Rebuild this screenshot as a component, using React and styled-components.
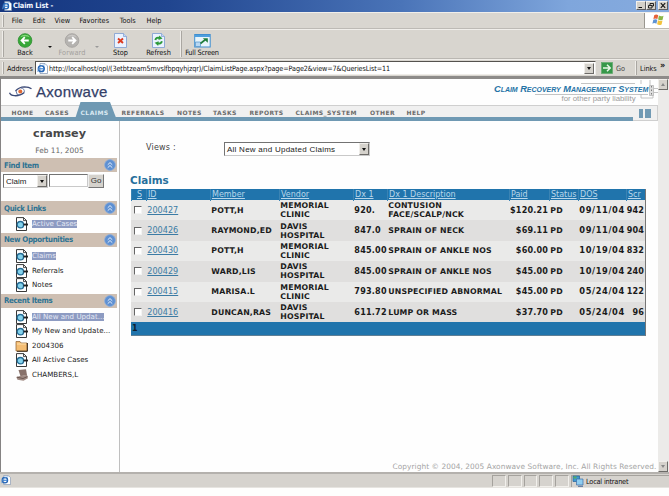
import React from "react";
import styled, { createGlobalStyle } from "styled-components";

const tahoma = `"DejaVu Sans Condensed", "DejaVu Sans", sans-serif`;
const verdana = `"DejaVu Sans", sans-serif`;
const arial = `"Liberation Sans", sans-serif`;

const GlobalStyle = createGlobalStyle`
  * { box-sizing: border-box; }
  body {
    margin: 0;
    background: #fefefd;
    overflow: hidden;
  }
`;

const menus = [
  { name: "File", width: 21 },
  { name: "Edit", width: 21.8 },
  { name: "View", width: 25 },
  { name: "Favorites", width: 40.2 },
  { name: "Tools", width: 26.8 },
  { name: "Help", width: 20 },
];

const tabs = [
  { name: "HOME", width: 33.5 },
  { name: "CASES", width: 35.5 },
  { name: "CLAIMS", width: 41, active: true },
  { name: "REFERRALS", width: 55.5 },
  { name: "NOTES", width: 36 },
  { name: "TASKS", width: 36.5 },
  { name: "REPORTS", width: 46 },
  { name: "CLAIMS_SYSTEM", width: 74.5 },
  { name: "OTHER", width: 36.5 },
  { name: "HELP", width: 30 },
];

const columns = [
  { name: "S", align: "center" },
  { name: "ID" },
  { name: "Member" },
  { name: "Vendor" },
  { name: "Dx 1" },
  { name: "Dx 1 Description" },
  { name: "Paid" },
  { name: "Status" },
  { name: "DOS" },
  { name: "Scr" },
];

const claims = [
  { id: "200427", member: "POTT,H", vendor: ["MEMORIAL", "CLINIC"], dx: "920.", desc: ["CONTUSION", "FACE/SCALP/NCK"], paid: "$120.21", dos: "09/11/04", scr: "942" },
  { id: "200426", member: "RAYMOND,ED", vendor: ["DAVIS", "HOSPITAL"], dx: "847.0", desc: ["SPRAIN OF NECK"], paid: "$69.11", dos: "09/11/04", scr: "904" },
  { id: "200430", member: "POTT,H", vendor: ["MEMORIAL", "CLINIC"], dx: "845.00", desc: ["SPRAIN OF ANKLE NOS"], paid: "$60.00", dos: "10/19/04", scr: "832" },
  { id: "200429", member: "WARD,LIS", vendor: ["DAVIS", "HOSPITAL"], dx: "845.00", desc: ["SPRAIN OF ANKLE NOS"], paid: "$45.00", dos: "10/19/04", scr: "240" },
  { id: "200415", member: "MARISA.L", vendor: ["MEMORIAL", "CLINIC"], dx: "793.80", desc: ["UNSPECIFIED ABNORMAL"], paid: "$45.00", dos: "05/24/04", scr: "122" },
  { id: "200416", member: "DUNCAN,RAS", vendor: ["DAVIS", "HOSPITAL"], dx: "611.72", desc: ["LUMP OR MASS"], paid: "$37.70", dos: "05/24/04", scr: "96" },
];

/* ---------- browser window ---------- */

const Window = styled.div`
  width: 669px;
  height: 496px;
  display: flex;
  flex-direction: column;
  background: #fefefd;
  font-family: ${tahoma};
  font-stretch: condensed;
  font-size: 7.3px;
  letter-spacing: -0.05px;
  color: #111;
  white-space: nowrap;
  overflow: hidden;
`;

const TitleBar = styled.div`
  height: 12px;
  flex: none;
  display: flex;
  align-items: center;
  padding: 0 1px 1px 2px;
  background: linear-gradient(90deg, #15367f 0%, #20458f 25%, #4a74b8 60%, #7fa6dc 85%, #86abde 100%);
`;

const TitleText = styled.span`
  flex: 1;
  margin-left: 1px;
  color: #f4f7ff;
  font-weight: bold;
  font-size: 7.4px;
  letter-spacing: -0.15px;
`;

const WindowButton = styled.span`
  width: 10px;
  height: 9px;
  margin-left: ${(p) => p.$gap || 0}px;
  border: 1px solid;
  border-color: #f2f0ec #5d5d60 #5d5d60 #f2f0ec;
  background: #d4d0c8;
  svg { display: block; }
`;

const MenuBar = styled.div`
  height: 17px;
  flex: none;
  display: flex;
  align-items: center;
  padding-left: 3px;
  background: #d9d6d0;
  border-top: 1px solid #f1efeb;
  border-bottom: 1px solid #bdbab5;
`;

const Grip = styled.span`
  width: 1px;
  height: ${(p) => p.$height}px;
  margin-right: ${(p) => p.$gap}px;
  background: #aaa7a2;
  box-shadow: -1px 0 #efede9;
`;

const MenuItem = styled.span`
  width: ${(p) => p.$width}px;
  letter-spacing: 0;
`;

const WindowsFlag = styled.div`
  width: 25px;
  height: 15px;
  margin-left: auto;
  padding-left: 7px;
  background: #fff;
  border-left: 1px solid #99968f;
`;

const Toolbar = styled.div`
  height: 30px;
  flex: none;
  display: flex;
  align-items: center;
  padding-left: 3px;
  background: #d8d5cf;
  border-top: 1px solid #f0eeea;
  border-bottom: 1px solid #bab7b2;
`;

const ToolButton = styled.div`
  width: ${(p) => p.$width}px;
  height: 27px;
  display: flex;
  flex-direction: column;
  align-items: center;
  justify-content: space-between;
  line-height: 10px;
  letter-spacing: ${(p) => p.$spacing || 0}px;
  color: ${(p) => (p.$disabled ? "#a4a19d" : "#111")};
  svg { display: block; margin-top: 2px; }
`;

const DropArrow = styled.span`
  width: 0;
  margin: 5px ${(p) => p.$right}px 0 ${(p) => p.$left}px;
  border: 2px solid transparent;
  border-top-color: ${(p) => (p.$disabled ? "#999" : "#111")};
  border-bottom: 0;
`;

const AddressBar = styled.div`
  height: 17px;
  flex: none;
  display: flex;
  align-items: center;
  padding-left: 3px;
  background: #d8d5cf;
  border-top: 1px solid #efede9;
`;

const AddressField = styled.div`
  width: 561px;
  height: 14px;
  display: flex;
  align-items: center;
  padding: 0 1px;
  margin-left: 2.3px;
  background: #fff;
  border: 1px solid;
  border-color: #55534f #efede9 #efede9 #55534f;
`;

const Url = styled.span`
  flex: 1;
  margin-left: 1px;
  font-size: 7.2px;
  letter-spacing: -0.1px;
`;

const BoxArrow = styled.span`
  width: 10px;
  height: ${(p) => p.$height || 11}px;
  flex: none;
  display: flex;
  align-items: center;
  justify-content: center;
  background: #d5d2cc;
  border: 1px solid;
  border-color: #f0eeea #6d6b68 #6d6b68 #f0eeea;
  &::after {
    content: "";
    border: 2.5px solid transparent;
    border-top: 3px solid ${(p) => p.$color || "#111"};
    border-bottom: 0;
    transform: ${(p) => (p.$up ? "rotate(180deg)" : "none")};
  }
`;

const GoLabel = styled.span`
  width: 20px;
  margin-left: 3px;
  color: #444;
`;

const LinksLabel = styled.span`
  width: 20px;
`;

const Chevrons = styled.span`
  font-size: 9px;
  font-weight: bold;
  line-height: 8px;
  margin-bottom: 6px;
`;

const StatusBar = styled.div`
  height: 16px;
  flex: none;
  display: flex;
  align-items: center;
  padding-left: 1px;
  background: #d6d3ce;
  border-top: 2px solid #b4b1ad;
  border-bottom: 1px solid #e6e4e0;
`;

const StatusText = styled.span`
  flex: 1;
`;

const StatusCell = styled.span`
  width: 13.8px;
  height: 12px;
  margin-right: 2px;
  border: 1px solid;
  border-color: #a5a29d #f2f0ec #f2f0ec #a5a29d;
`;

const Zone = styled.span`
  width: 98px;
  height: 12px;
  display: flex;
  align-items: center;
  gap: 2px;
  letter-spacing: -0.2px;
  border-left: 1px solid #a5a29d;
  border-top: 1px solid #a5a29d;
`;

/* ---------- page ---------- */

const Viewport = styled.div`
  height: 396px;
  flex: none;
  display: flex;
  border-top: 3px solid #8d8b89;
  border-left: 1px solid #858383;
  background: #fefefe;
  font-family: ${verdana};
  font-stretch: normal;
  letter-spacing: 0;
`;

const Page = styled.div`
  width: 657px;
  display: flex;
  flex-direction: column;
`;

const ScrollTrack = styled.div`
  width: 11px;
  display: flex;
  flex-direction: column;
  justify-content: space-between;
  background: #ecebe9;
`;

const Brand = styled.header`
  height: 26px;
  flex: none;
  display: flex;
  justify-content: space-between;
  padding: 0 0 0 7px;
`;

const BrandLogo = styled.div`
  display: flex;
  align-items: center;
  gap: 3px;
  padding-bottom: 2px;
`;

const BrandName = styled.span`
  font-family: ${arial};
  font-size: 15px;
  letter-spacing: 0.3px;
  color: #333f68;
  -webkit-text-stroke: 0.25px #333f68;
`;

const Product = styled.div`
  position: relative;
  width: 165px;
  padding: 4px 0 0 1px;
  font-family: ${arial};
`;

const ProductTitle = styled.div`
  position: relative;
  z-index: 1;
  font-size: 9.3px;
  line-height: 12px;
  letter-spacing: -0.04px;
  font-weight: bold;
  font-style: italic;
  font-variant: small-caps;
  color: #2673a6;
`;

const ProductSubtitle = styled.div`
  padding-left: 67.5px;
  font-size: 7.8px;
  line-height: 8px;
  color: #9a9a9a;
`;

const Circuit = styled.svg`
  position: absolute;
  left: 40px;
  top: 1px;
`;

const NavRow = styled.nav`
  height: 16px;
  flex: none;
  display: flex;
  border-top: 1px solid #cfcfcf;
  border-right: 1px solid #cfcfcf;
  background: #f0f0f0;
`;

const Tabs = styled.div`
  width: 632px;
  display: flex;
  padding-left: 10.5px;
  border-bottom: 4px solid #6f99b3;
`;

const Tab = styled.span`
  position: relative;
  width: ${(p) => p.$width}px;
  line-height: 14.5px;
  font-size: 6px;
  font-weight: bold;
  letter-spacing: 0.45px;
  color: ${(p) => (p.$active ? "#dbe9f2" : "#6b6b6b")};
`;

/* raised trapezoid behind the selected tab */
const TabShape = styled.svg`
  position: absolute;
  left: -6px;
  top: -4px;
`;

const TabText = styled.span`
  position: relative;
`;

const NavBlocks = styled.div`
  flex: 1;
  display: flex;
  gap: 2px;
  padding: 3px 0 0 6px;
  border-bottom: 1px solid #cfcfcf;
`;

const Block = styled.i`
  width: ${(p) => p.$width}px;
  height: 9px;
  background: #719ab4;
`;

const Body = styled.div`
  flex: 1;
  display: flex;
`;

const Sidebar = styled.aside`
  width: 119px;
  border-right: 1px solid #bfbfbf;
  color: #333;
`;

const User = styled.div`
  height: 24px;
  width: 117px;
  line-height: 25px;
  text-align: center;
  font-size: 11.2px;
  font-weight: bold;
  color: #474747;
`;

const Today = styled.div`
  height: 13px;
  width: 117px;
  line-height: 12px;
  text-align: center;
  font-size: 7.4px;
  color: #666;
`;

const SectionHead = styled.div`
  width: 116px;
  height: 14px;
  display: flex;
  align-items: center;
  justify-content: space-between;
  padding: 0 1px 0 3px;
  background: #cebfb2;
  font-family: ${tahoma};
  font-stretch: condensed;
  font-size: 7.8px;
  font-weight: bold;
  letter-spacing: -0.32px;
  color: #2f7393;
`;

const FindForm = styled.div`
  height: 29px;
  display: flex;
  align-items: flex-start;
  padding: 2px 0 0 2px;
`;

const SelectBox = styled.span`
  width: ${(p) => p.$width}px;
  height: 14px;
  display: flex;
  align-items: center;
  justify-content: space-between;
  padding-left: 2px;
  background: #fff;
  border: 1px solid;
  border-color: #737373 #c9c9c9 #c9c9c9 #737373;
  font-family: ${arial};
  font-size: 8px;
  letter-spacing: ${(p) => p.$spacing || 0}px;
  color: #222;
`;

const TextInput = styled.span`
  width: 39px;
  height: 13px;
  margin-left: 1px;
  background: #fff;
  border: 1px solid;
  border-color: #737373 #c9c9c9 #c9c9c9 #737373;
`;

const GoButton = styled.span`
  width: 16px;
  height: 14px;
  line-height: 11px;
  text-align: center;
  background: #d5d2cc;
  border: 1px solid;
  border-color: #eee #777 #777 #eee;
  font-family: ${arial};
  font-size: 8px;
`;

const Items = styled.ul`
  margin: 0;
  padding: ${(p) => p.$pad};
  list-style: none;
`;

const Item = styled.li`
  height: 14.4px;
  display: flex;
  align-items: center;
  gap: 2.5px;
  padding-left: 14px;
  svg { flex: none; }
`;

const ItemText = styled.span`
  font-size: 7.1px;
  line-height: 8px;
  padding-left: 0.5px;
  color: ${(p) => (p.$visited ? "#e4e8f4" : "#222")};
  background: ${(p) => (p.$visited ? "#8d9bc2" : "none")};
`;

const Main = styled.main`
  flex: 1;
  display: flex;
  flex-direction: column;
  padding: 21px 0 0 10px;
`;

const ViewsRow = styled.div`
  height: 14px;
  display: flex;
  align-items: center;
  padding-left: 16px;
`;

const ViewsLabel = styled.span`
  width: 78px;
  margin-top: -3px;
  font-size: 8px;
  letter-spacing: 0.2px;
  color: #444;
`;

const Heading = styled.h1`
  height: 14px;
  margin: 17px 0 2px;
  font-size: 10.4px;
  line-height: 14px;
  font-weight: bold;
  color: #266f9c;
`;

const Table = styled.div`
  width: 515px;
  margin-left: 1px;
  border-right: 1px solid #777;
  border-bottom: 1px solid #5f7f95;
`;

const Row = styled.div`
  display: grid;
  grid-template-columns: 15px 64px 69px 74px 34px 122px 40px 29px 48px 19px;
  height: ${(p) => (p.$head ? 11 : 20.4)}px;
  background: ${(p) => (p.$head ? "#2074ac" : p.$alt ? "#e0dfde" : "#eaeae9")};
`;

const HeadCell = styled.span`
  padding-left: 1px;
  line-height: 11.5px;
  font-size: 8px;
  text-align: ${(p) => p.$align || "left"};
  text-decoration: underline;
  color: #b8d6ea;
  border-left: 1px solid #3b83b3;
`;

const Cell = styled.span`
  display: flex;
  flex-direction: column;
  justify-content: center;
  align-items: ${(p) => (p.$right ? "flex-end" : "flex-start")};
  padding: 0 1px 0 ${(p) => (p.$right ? 0 : 1.3)}px;
  font-size: ${(p) => p.$size || 7.8}px;
  line-height: 9px;
  font-weight: bold;
  letter-spacing: ${(p) => p.$spacing || 0.15}px;
  color: #1b1b1b;
`;

const ClaimLink = styled.span`
  font-size: 8.1px;
  font-weight: normal;
  letter-spacing: 0;
  text-decoration: underline;
  color: #3b7ba4;
`;

const Checkbox = styled.i`
  width: 8px;
  height: 8px;
  margin-left: 2px;
  background: #fff;
  border: 1px solid;
  border-color: #666 #f4f4f4 #f4f4f4 #666;
`;

const Pager = styled.div`
  height: 12.6px;
  padding-left: 1px;
  line-height: 13px;
  font-size: 8px;
  font-weight: bold;
  background: #2074ac;
  color: #0d1d2b;
`;

const Copyright = styled.footer`
  margin-top: auto;
  padding-right: 1.5px;
  text-align: right;
  line-height: 11px;
  font-size: 7.4px;
  letter-spacing: 0.06px;
  color: #a5a5a5;
`;

/* ---------- icons ---------- */

const IeIcon = ({ size = 11 }) => (
  <svg width={size} height={size} viewBox="0 0 11 11">
    <path d="M3 .5h5l2.5 2.5v7.5H3z" fill="#fff" stroke="#7d90ad" strokeWidth=".7" />
    <circle cx="4.3" cy="5.7" r="2.9" fill="none" stroke="#2565b5" strokeWidth="1.5" />
    <path d="M2 5.8h5" stroke="#2f7bd0" strokeWidth="1.1" />
    <path d="M.6 9C1 5 4 2 8.3 1.8" fill="none" stroke="#6ba3e0" strokeWidth=".7" />
  </svg>
);

const FlagIcon = () => (
  <svg width="13" height="13" viewBox="0 0 13 13">
    <path d="M2.2 2.2q2-1.3 4 0L5.4 6q-2-1.2-4 0z" fill="#e5623a" />
    <path d="M6.9 2.6q2 1.3 4.6.2L10.6 6.7q-2.4 1.1-4.5-.2z" fill="#8cb848" />
    <path d="M1.3 6.8q2-1.2 4 0l-.9 3.9q-2-1.3-4 0z" fill="#5e93d4" />
    <path d="M6 7.3q2 1.3 4.5.2l-.9 3.9q-2.4 1.2-4.5-.2z" fill="#f2c33f" />
  </svg>
);

const ArrowCircle = ({ forward }) => (
  <svg width="16" height="16" viewBox="0 0 16 16">
    <circle cx="8" cy="8" r="7.3" fill={forward ? "#b5b3b0" : "#38a838"} stroke={forward ? "#a09e9b" : "#2a8c2d"} strokeWidth=".8" />
    <path d="M3 4.5a6 6 0 0 1 10 0Q8 2.5 3 4.5z" fill={forward ? "#cac8c5" : "#82d77a"} />
    <path
      d="M12 8H4.5M7.8 4.5 4.3 8l3.5 3.5"
      fill="none"
      stroke="#fff"
      strokeWidth="1.9"
      transform={forward ? "translate(16 0) scale(-1 1)" : undefined}
    />
  </svg>
);

const StopIcon = () => (
  <svg width="13" height="15" viewBox="0 0 13 15">
    <path d="M.5.5h9l3 3v11H.5z" fill="#eaf2ff" stroke="#7b9cd0" strokeWidth=".8" />
    <path d="M9.5.5v3h3" fill="#c3d6f2" stroke="#7b9cd0" strokeWidth=".7" />
    <path d="M4 5.5 9 10M9 5.5 4 10" stroke="#dd3a1e" strokeWidth="1.9" />
  </svg>
);

const RefreshIcon = () => (
  <svg width="13" height="15" viewBox="0 0 13 15">
    <path d="M.5.5h9l3 3v11H.5z" fill="#eaf2ff" stroke="#7b9cd0" strokeWidth=".8" />
    <path d="M9.5.5v3h3" fill="#c3d6f2" stroke="#7b9cd0" strokeWidth=".7" />
    <path d="M3.3 7Q4.3 3.800 7.8 5" fill="none" stroke="#2d9a3a" strokeWidth="2" />
    <path d="m7.200 2.400 3.300 3.200-4 1.500z" fill="#2d9a3a" />
    <path d="M9.900 8.200q-1 3.200-4.600 2" fill="none" stroke="#2d9a3a" strokeWidth="2" />
    <path d="M6.200 13 2.700 9.800l4-1.500z" fill="#2d9a3a" />
  </svg>
);

const FullScreenIcon = () => (
  <svg width="17" height="15" viewBox="0 0 17 15">
    <rect x=".7" y="1.5" width="15.5" height="12.5" fill="#e9f5fb" stroke="#3f8fd0" />
    <path d="M1 2h15v2H1z" fill="#4e9fdf" />
    <path d="M1.5 9h5v4.5h-5z" fill="#b9d8f2" stroke="#4e8fc8" strokeWidth=".7" />
    <path d="m6.5 10.5 5-4" stroke="#207e3d" strokeWidth="1.7" />
    <path d="M8.8 5.2h5v4.5z" fill="#207e3d" />
  </svg>
);

const GoIcon = () => (
  <svg width="12" height="12" viewBox="0 0 12 12">
    <rect x=".5" y=".5" width="11" height="11" fill="#37984a" stroke="#66ab70" strokeWidth=".8" />
    <path d="M2 6h7M6 2.8 9.2 6 6 9.2" fill="none" stroke="#e9f7e8" strokeWidth="1.5" />
  </svg>
);

const AxonIcon = () => (
  <svg width="25" height="13" viewBox="0 0 25 13">
    <path d="M1.5 7.8q1 2.7 5 2.9 5.5.4 9.8-3.3" fill="none" stroke="#3c4a76" strokeWidth="1.3" />
    <path d="M7.5 6Q11 2 16.5 1.8q4.5 0 7 1.9" fill="none" stroke="#3c4a76" strokeWidth="1.3" />
    <path d="M8 5.8Q8 10 12 10.5M16.2 7.5Q17 3.5 13 3" fill="none" stroke="#6a7aa3" strokeWidth="1" />
    <circle cx="12.3" cy="6.6" r="2" fill="#e06a35" />
  </svg>
);

const CollapseIcon = () => (
  <svg width="12" height="12" viewBox="0 0 12 12">
    <circle cx="6" cy="6" r="5.4" fill="#5e90d2" stroke="#89aede" strokeWidth=".7" />
    <path d="M3.7 5.8 6 3.6l2.3 2.2M3.7 8.7 6 6.5l2.3 2.2" fill="none" stroke="#e4eefb" strokeWidth="1" />
  </svg>
);

const QueryIcon = () => (
  <svg width="14" height="14" viewBox="0 0 14 14">
    <path d="M1.500.6H8.500L11.500 3.500v10h-10z" fill="#fff" stroke="#222" strokeWidth=".9" />
    <path d="M8.500.6v3h3" fill="none" stroke="#222" strokeWidth=".8" />
    <circle cx="5.4" cy="7.7" r="3.2" fill="#84d2ec" stroke="#256b94" strokeWidth="1.3" />
    <path d="M8.500 7.500H13" stroke="#222" strokeWidth="1.9" />
  </svg>
);

const FolderIcon = () => (
  <svg width="14" height="14" viewBox="0 0 14 14">
    <path d="M1 2.500h4l1 1.500h6v8H1z" fill="#f4bd73" stroke="#8b5d2c" strokeWidth=".7" />
    <path d="M2 5h9" stroke="#fde0ad" />
    <path d="M12.4 4v8.3H2" fill="none" stroke="#3a2a1a" strokeWidth="1" />
  </svg>
);

const PhoneIcon = () => (
  <svg width="14" height="14" viewBox="0 0 14 14">
    <path d="m3.500 2 7.500-.8 1 5.800-6.500 1.200z" fill="#87716a" />
    <path d="m5 8 7-1.200 1 3.400-4.500 2.600-6-1L1.200 9z" fill="#a08b84" />
    <path d="m2 9.200 6 1.300 4.500-2" fill="none" stroke="#5c4943" strokeWidth=".8" />
  </svg>
);

const NetworkIcon = () => (
  <svg width="12" height="12" viewBox="0 0 12 12">
    <path d="M1 1h6.500v5.500H1z" fill="#3f9ad0" stroke="#245e98" strokeWidth=".7" />
    <path d="M4.500 4H11v6H4.500z" fill="#8fcdf0" stroke="#3d6ea8" strokeWidth=".7" />
    <path d="M6 11.300h5" stroke="#4c6d9d" />
    <path d="M1.500 1.500h3v2h-3z" fill="#56ac66" />
  </svg>
);

const Section = ({ title, children }) => (
  <>
    <SectionHead>
      <span>{title}</span>
      <CollapseIcon />
    </SectionHead>
    {children}
  </>
);

const SideItem = ({ icon, visited, children }) => (
  <Item>
    {icon || <QueryIcon />}
    <ItemText $visited={visited}>{children}</ItemText>
  </Item>
);

const BrowserChrome = () => (
  <>
    <TitleBar>
      <IeIcon size={10} />
      <TitleText>Claim List -</TitleText>
      <WindowButton>
        <svg width="8" height="7"><path d="M1.5 5.5H5" stroke="#111" /></svg>
      </WindowButton>
      <WindowButton>
        <svg width="8" height="7"><path d="M3 3V1.5h3.5V4H5M1.5 3.5H5V6H1.5z" fill="none" stroke="#111" strokeWidth=".9" /></svg>
      </WindowButton>
      <WindowButton $gap={2}>
        <svg width="8" height="7"><path d="m1.8 1.2 4.4 4.6M6.2 1.2 1.8 5.8" stroke="#111" strokeWidth="1.1" /></svg>
      </WindowButton>
    </TitleBar>

    <MenuBar>
      <Grip $height={12} $gap={7.7} />
      {menus.map((item) => (
        <MenuItem key={item.name} $width={item.width}>{item.name}</MenuItem>
      ))}
      <WindowsFlag>
        <FlagIcon />
      </WindowsFlag>
    </MenuBar>

    <Toolbar>
      <Grip $height={26} $gap={9} />
      <ToolButton $width={24} $spacing={-0.1}><ArrowCircle />Back</ToolButton>
      <DropArrow $left={10.5} $right={4.5} />
      <ToolButton $width={32} $spacing={0.1} $disabled><ArrowCircle forward />Forward</ToolButton>
      <DropArrow $left={6.5} $right={6.5} $disabled />
      <ToolButton $width={31}><StopIcon />Stop</ToolButton>
      <ToolButton $width={45}><RefreshIcon />Refresh</ToolButton>
      <Grip $height={26} $gap={0} />
      <ToolButton $width={40} $spacing={-0.2}><FullScreenIcon />Full Screen</ToolButton>
    </Toolbar>

    <AddressBar>
      <Grip $height={12} $gap={3} />
      <span>Address</span>
      <AddressField>
        <IeIcon />
        <Url>
          http://localhost/opl/(3etbtzeam5mvslfbpqyhjzqr)/ClaimListPage.aspx?page=Page2&amp;view=7&amp;QueriesList=11
        </Url>
        <BoxArrow />
      </AddressField>
      <Grip $height={0} $gap={4} />
      <GoIcon />
      <GoLabel>Go</GoLabel>
      <Grip $height={14} $gap={3} />
      <LinksLabel>Links</LinksLabel>
      <Chevrons>»</Chevrons>
    </AddressBar>
  </>
);

const PageHeader = () => (
  <>
    <Brand>
      <BrandLogo>
        <AxonIcon />
        <BrandName>Axonwave</BrandName>
      </BrandLogo>
      <Product>
        <Circuit width="125" height="22" viewBox="0 0 125 22" fill="none" stroke="#b5b5b5" strokeWidth=".8">
          <path d="M48 3.5h54M2 14.5h113M108 0v4M117 0v5M108 14.5V18h12v-3M121 12.5h4M121 8.5h4" />
          <path d="M116.5 5.5h4v10h-4z" fill="#ddd" />
          <path d="M118.5 6v9" stroke="#666" strokeDasharray="1.5 2" />
        </Circuit>
        <ProductTitle>Claim Recovery Management System</ProductTitle>
        <ProductSubtitle>for other party liability</ProductSubtitle>
      </Product>
    </Brand>
    <NavRow>
      <Tabs>
        {tabs.map((tab) => (
          <Tab key={tab.name} $width={tab.width} $active={tab.active}>
            {tab.active && (
              <TabShape width="42" height="17">
                <path d="M0 17 5.5 0H35l6.5 17z" fill="#6f99b3" />
              </TabShape>
            )}
            <TabText>{tab.name}</TabText>
          </Tab>
        ))}
      </Tabs>
      <NavBlocks>
        <Block $width={4} />
        <Block $width={6} />
      </NavBlocks>
    </NavRow>
  </>
);

const App = () => {
  return (
    <Window>
      <GlobalStyle />
      <BrowserChrome />

      <Viewport>
        <Page>
          <PageHeader />
          <Body>
            <Sidebar>
              <User>cramsey</User>
              <Today>Feb 11, 2005</Today>
              <Section title="Find Item">
                <FindForm>
                  <SelectBox $width={45}>
                    Claim
                    <BoxArrow $height={12} />
                  </SelectBox>
                  <TextInput />
                  <GoButton>Go</GoButton>
                </FindForm>
              </Section>
              <Section title="Quick Links">
                <Items $pad="2px 0 1.6px">
                  <SideItem visited>Active Cases</SideItem>
                </Items>
              </Section>
              <Section title="New Opportunities">
                <Items $pad="2px 0 1.6px">
                  <SideItem visited>Claims</SideItem>
                  <SideItem>Referrals</SideItem>
                  <SideItem>Notes</SideItem>
                </Items>
              </Section>
              <Section title="Recent Items">
                <Items $pad="2px 0">
                  <SideItem visited>All New and Updat...</SideItem>
                  <SideItem>My New and Update...</SideItem>
                  <SideItem icon={<FolderIcon />}>2004306</SideItem>
                  <SideItem>All Active Cases</SideItem>
                  <SideItem icon={<PhoneIcon />}>CHAMBERS,L</SideItem>
                </Items>
              </Section>
            </Sidebar>

            <Main>
              <ViewsRow>
                <ViewsLabel>Views :</ViewsLabel>
                <SelectBox $width={146} $spacing={0.25}>
                  All New and Updated Claims
                  <BoxArrow $height={12} />
                </SelectBox>
              </ViewsRow>

              <Heading>Claims</Heading>
              <Table>
                <Row $head>
                  {columns.map((col) => (
                    <HeadCell key={col.name} $align={col.align}>{col.name}</HeadCell>
                  ))}
                </Row>
                {claims.map((claim, index) => (
                  <Row key={claim.id} $alt={index % 2 === 1}>
                    <Cell><Checkbox /></Cell>
                    <Cell><ClaimLink>{claim.id}</ClaimLink></Cell>
                    <Cell>{claim.member}</Cell>
                    <Cell>
                      {claim.vendor.map((line) => <span key={line}>{line}</span>)}
                    </Cell>
                    <Cell $size={8.1} $spacing={0.2}>{claim.dx}</Cell>
                    <Cell>
                      {claim.desc.map((line) => <span key={line}>{line}</span>)}
                    </Cell>
                    <Cell $right $size={8.1} $spacing={0.15}>{claim.paid}</Cell>
                    <Cell>PD</Cell>
                    <Cell $size={8.3} $spacing={0.6}>{claim.dos}</Cell>
                    <Cell $right $size={8.1} $spacing={0.1}>{claim.scr}</Cell>
                  </Row>
                ))}
                <Pager>1</Pager>
              </Table>

              <Copyright>
                Copyright © 2004, 2005 Axonwave Software, Inc. All Rights Reserved.
              </Copyright>
            </Main>
          </Body>
        </Page>
        <ScrollTrack>
          <BoxArrow $up $color="#888" />
          <BoxArrow $color="#888" />
        </ScrollTrack>
      </Viewport>

      <StatusBar>
        <StatusText><IeIcon size={10} /></StatusText>
        <StatusCell />
        <StatusCell />
        <StatusCell />
        <StatusCell />
        <StatusCell />
        <Zone>
          <NetworkIcon />
          Local intranet
        </Zone>
      </StatusBar>
    </Window>
  );
};

export default App;
